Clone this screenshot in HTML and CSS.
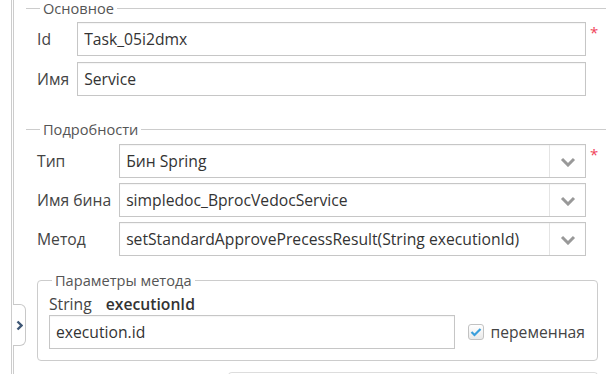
FILE: index.html
```html
<!DOCTYPE html>
<html lang="ru">
<head>
    <meta charset="UTF-8">
    <meta name="viewport" content="width=device-width, initial-scale=1.0">
    <title>Свойства задачи</title>
    <link rel="stylesheet" href="styles.css">
</head>
<body>
    <div class="shell">
        <div class="rail"></div>
        <div class="main">
            <div class="side-tab">
                <svg width="7" height="11" viewBox="0 0 7 11"><polyline points="1.5,1.5 5.5,5.5 1.5,9.5" fill="none" stroke="#3f5876" stroke-width="2.4"/></svg>
            </div>

            <fieldset class="group">
                <legend>Основное</legend>
                <div class="rows">
                    <label for="task_id">Id</label>
                    <input type="text" id="task_id" value="Task_05i2dmx">
                    <span class="req">*</span>

                    <label for="task_name">Имя</label>
                    <input type="text" id="task_name" value="Service">
                    <span></span>
                </div>
            </fieldset>

            <fieldset class="group details">
                <legend>Подробности</legend>
                <div class="rows tight">
                    <label>Тип</label>
                    <div class="combo">
                        <span class="combo-value">Бин Spring</span>
                        <span class="combo-btn"><svg width="16" height="10" viewBox="0 0 16 10"><polyline points="2,2 8,8 14,2" fill="none" stroke="#999" stroke-width="3"/></svg></span>
                    </div>
                    <span class="req">*</span>

                    <label>Имя бина</label>
                    <div class="combo">
                        <span class="combo-value">simpledoc_BprocVedocService</span>
                        <span class="combo-btn"><svg width="16" height="10" viewBox="0 0 16 10"><polyline points="2,2 8,8 14,2" fill="none" stroke="#999" stroke-width="3"/></svg></span>
                    </div>
                    <span></span>

                    <label>Метод</label>
                    <div class="combo">
                        <span class="combo-value">setStandardApprovePrecessResult(String executionId)</span>
                        <span class="combo-btn"><svg width="16" height="10" viewBox="0 0 16 10"><polyline points="2,2 8,8 14,2" fill="none" stroke="#999" stroke-width="3"/></svg></span>
                    </div>
                    <span></span>
                </div>

                <fieldset class="params">
                    <legend>Параметры метода</legend>
                    <div class="param-name">String <b>executionId</b></div>
                    <div class="param-row">
                        <input type="text" value="execution.id">
                        <label class="check">
                            <span class="check-box"><svg width="12" height="10" viewBox="0 0 12 10"><polyline points="1.5,5 4.5,8 10.5,2" fill="none" stroke="#3a9fdc" stroke-width="2.2"/></svg></span>
                            переменная
                        </label>
                    </div>
                </fieldset>

                <div class="next-block"></div>
            </fieldset>
        </div>
    </div>
</body>
</html>
```

FILE: styles.css
```css
body { margin: 0; font-family: "Open Sans", "DejaVu Sans", sans-serif; font-size: 15.7px; color: #333; background: #fff; }
.shell { display: flex; height: 374px; overflow: hidden; }
.rail { margin-left: 11px; width: 1px; border-left: 1px solid #ccc; }
.main { position: relative; flex: 1; border-left: 1px solid #ccc; padding-left: 12px; }

.side-tab {
    position: absolute;
    left: -1px;
    top: 304px;
    width: 12px;
    height: 40px;
    background: #fff;
    border: 1px solid #c8c8c8;
    border-left: none;
    border-radius: 0 6px 6px 0;
    display: flex;
    align-items: center;
    justify-content: center;
}

.group { margin: 0; padding: 0 0 0 11px; border: none; border-top: 1px solid #ccc; min-width: 0; }
.group legend { margin-left: 3px; padding: 0 3px; font-size: 14.6px; line-height: 17px; color: #555; }
.details { margin-top: 25px; }

.rows { display: grid; grid-template-columns: auto 1fr 20px; row-gap: 6px; padding-top: 5px; align-items: center; }
.rows.tight { row-gap: 5px; padding-top: 6px; }
.rows label { padding-right: 8px; color: #444; }
.req { align-self: start; color: #f0445a; font-size: 15px; line-height: 14px; padding: 3px 0 0 4px; }

input[type="text"] {
    box-sizing: border-box;
    height: 34px;
    padding: 0 6px;
    border: 1px solid #c6c6c6;
    font: inherit;
    color: #333;
    background: #fff;
    box-shadow: inset 0 1px 1px rgba(0,0,0,0.04);
    outline: none;
}

.combo { display: flex; height: 34px; box-sizing: border-box; border: 1px solid #c6c6c6; box-shadow: inset 0 1px 1px rgba(0,0,0,0.04); }
.combo-value { flex: 1; padding: 0 6px; line-height: 32px; white-space: nowrap; overflow: hidden; }
.combo-btn { width: 35px; border-left: 1px solid #e4e4e4; display: flex; align-items: center; justify-content: center; padding-top: 1px; }

.params { margin: 16px 8px 0 0; padding: 0 12px 11px 11px; border: 1px solid #ccc; border-radius: 4px; min-width: 0; }
.params legend { margin-left: 3px; padding: 0 3px; font-size: 14.6px; line-height: 17px; color: #555; }
.param-name { line-height: 20px; margin-top: 5px; color: #444; }
.param-name b { margin-left: 10px; font-weight: 600; color: #333; }
.param-row { display: flex; align-items: center; margin-top: 1px; }
.param-row input { flex: 1; min-width: 0; }
.check { display: flex; align-items: center; margin-left: 13px; color: #444; }
.check-box {
    width: 14px;
    height: 14px;
    margin-right: 6px;
    border: 1px solid #c2c2c2;
    border-radius: 3px;
    background: linear-gradient(#fff, #e9e9e9);
    display: flex;
    align-items: center;
    justify-content: center;
}

.next-block { margin: 11px 8px 0 191px; height: 30px; border: 1px solid #ddd; border-bottom: none; border-radius: 4px 4px 0 0; }
```
